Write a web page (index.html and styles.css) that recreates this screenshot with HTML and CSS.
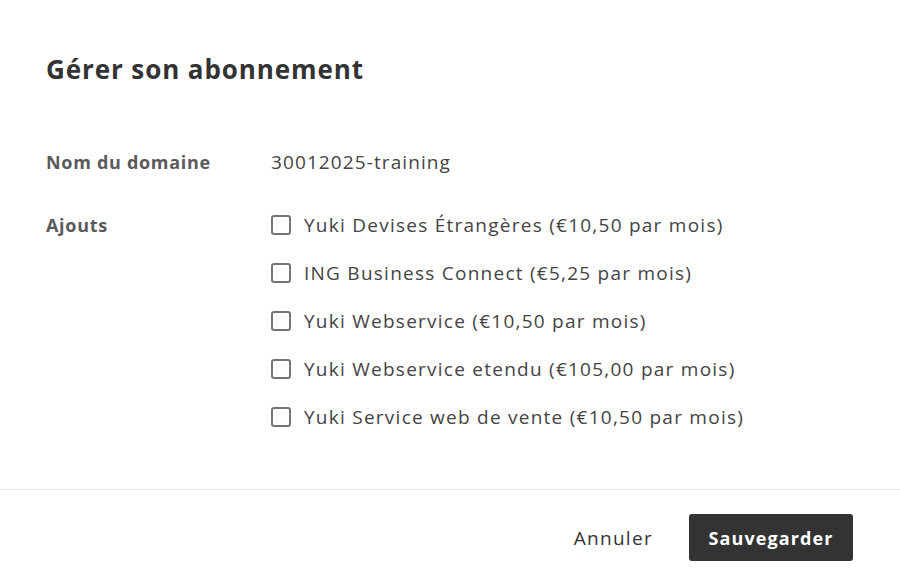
FILE: index.html
```html
<!DOCTYPE html>
<html lang="fr">
<head>
<meta charset="utf-8">
<title>Gérer son abonnement</title>
<link rel="stylesheet" href="styles.css">
</head>
<body>
<div class="dialog">
  <header class="dialog-header">
    <h1 class="dialog-title">Gérer son abonnement</h1>
  </header>
  <main class="dialog-body">
    <div class="field">
      <div class="field-label">Nom du domaine</div>
      <div class="field-value">30012025-training</div>
    </div>
    <div class="field">
      <div class="field-label">Ajouts</div>
      <div class="field-value options">
        <label class="option"><span class="box"></span><span>Yuki Devises Étrangères (€10,50 par mois)</span></label>
        <label class="option"><span class="box"></span><span>ING Business Connect (€5,25 par mois)</span></label>
        <label class="option"><span class="box"></span><span>Yuki Webservice (€10,50 par mois)</span></label>
        <label class="option"><span class="box"></span><span>Yuki Webservice etendu (€105,00 par mois)</span></label>
        <label class="option"><span class="box"></span><span>Yuki Service web de vente (€10,50 par mois)</span></label>
      </div>
    </div>
  </main>
  <footer class="dialog-footer">
    <button class="btn btn-text">Annuler</button>
    <button class="btn btn-primary">Sauvegarder</button>
  </footer>
</div>
</body>
</html>
```

FILE: styles.css
```css
* { box-sizing: border-box; }
html, body { margin: 0; padding: 0; background: #fff; }
body {
  font-family: "Open Sans", "Noto Sans", sans-serif;
  color: #333;
  width: 900px;
  height: 582px;
  overflow: hidden;
}
.dialog {
  display: flex;
  flex-direction: column;
  height: 582px;
}
.dialog-header {
  padding: 52px 46px 0;
}
.dialog-title {
  margin: 0;
  font-size: 26px;
  line-height: 34px;
  font-weight: 700;
  letter-spacing: 0.9px;
  color: #333;
}
.dialog-body {
  padding: 64px 46px 0;
  display: flex;
  flex-direction: column;
  gap: 39px;
  flex: 1;
}
.field {
  display: grid;
  grid-template-columns: 225px 1fr;
  line-height: 24px;
}
.field-label {
  font-size: 18px;
  font-weight: 700;
  letter-spacing: 0.7px;
  color: #5a5a5a;
}
.field-value {
  font-size: 19px;
  letter-spacing: 1.1px;
  color: #444;
}
.options {
  display: flex;
  flex-direction: column;
  gap: 24px;
}
.option {
  display: flex;
  align-items: center;
  gap: 13px;
  letter-spacing: 1.25px;
  color: #444;
}
.box {
  width: 20px;
  height: 20px;
  border: 2px solid #757575;
  border-radius: 3px;
  flex: none;
}
.dialog-footer {
  border-top: 1px solid #e8e8e8;
  height: 93px;
  display: flex;
  justify-content: flex-end;
  align-items: flex-start;
  padding: 24px 47px 0 0;
  gap: 20px;
}
.btn {
  font-family: inherit;
  border: none;
  cursor: pointer;
  height: 47px;
  border-radius: 3px;
}
.btn-text {
  background: transparent;
  color: #333;
  font-size: 19px;
  letter-spacing: 1.3px;
  padding: 0 16px;
}
.btn-primary {
  background: #333;
  color: #fff;
  font-size: 18px;
  font-weight: 700;
  letter-spacing: 1.1px;
  width: 164px;
}
```
